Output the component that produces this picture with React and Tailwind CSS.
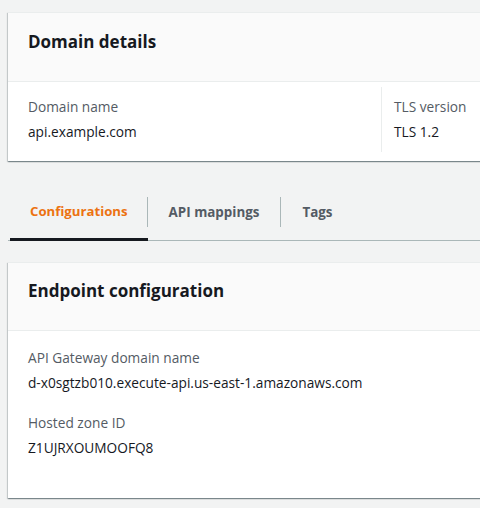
export default function App() {
  const font = { fontFamily: '"Open Sans", "Noto Sans", sans-serif' };
  return (
    <div
      className="w-[480px] h-[508px] overflow-hidden bg-[#f2f3f3] pt-3 pl-2"
      style={font}
    >
      {/* Card 1 */}
      <div className="w-[520px] bg-white border-t border-[#eaeded] shadow-[0_1px_1px_0_rgba(0,28,36,0.3),1px_1px_1px_0_rgba(0,28,36,0.15),-1px_1px_1px_0_rgba(0,28,36,0.15)]">
        <div className="h-[69px] bg-[#fafafa] border-b border-[#eaeded] px-5 pt-[18px]">
          <h2 className="text-[17px] leading-[22px] font-bold text-[#16191f]">Domain details</h2>
        </div>
        <div className="pt-[5px] pb-[9px] flex">
          <div className="w-[373px] pl-5 py-[9px]">
            <div className="text-[13.7px] leading-[22px] text-[#545b64]">Domain name</div>
            <div className="mt-[3px] text-[13.7px] leading-[22px] text-[#16191f]">api.example.com</div>
          </div>
          <div className="border-l border-[#eaeded] pl-3 py-[9px]">
            <div className="text-[13.7px] leading-[22px] text-[#545b64]">TLS version</div>
            <div className="mt-[3px] text-[13.7px] leading-[22px] text-[#16191f]">TLS 1.2</div>
          </div>
        </div>
      </div>

      {/* Tabs */}
      <div className="mt-[28px] w-[520px] border-b border-[#aab7b8] flex pl-[2px]">
        <div className="pt-[8px] pb-[11px] border-b-[3px] border-[#16191f] -mb-px">
          <div className="h-[30px] flex items-center pl-5 pr-[19px] border-r border-[#aab7b8] text-[13.2px] font-bold text-[#ec7211]">
            Configurations
          </div>
        </div>
        <div className="pt-[8px] pb-[11px] border-b-[3px] border-transparent -mb-px">
          <div className="h-[30px] flex items-center pl-[21px] pr-[21px] border-r border-[#aab7b8] text-[13.4px] font-bold text-[#545b64]">
            API mappings
          </div>
        </div>
        <div className="pt-[8px] pb-[11px] border-b-[3px] border-transparent -mb-px">
          <div className="h-[30px] flex items-center pl-[21px] pr-5 text-[13.4px] font-bold text-[#545b64]">
            Tags
          </div>
        </div>
      </div>

      {/* Card 2 */}
      <div className="mt-[21px] w-[520px] bg-white border-t border-[#eaeded] shadow-[0_1px_1px_0_rgba(0,28,36,0.3),1px_1px_1px_0_rgba(0,28,36,0.15),-1px_1px_1px_0_rgba(0,28,36,0.15)]">
        <div className="h-[68px] bg-[#fafafa] border-b border-[#eaeded] px-5 pt-[17px]">
          <h2 className="text-[17px] leading-[22px] font-bold text-[#16191f]">Endpoint configuration</h2>
        </div>
        <div className="pt-[16px] pb-[39px] px-5">
          <div className="text-[13.7px] leading-[22px] text-[#545b64]">API Gateway domain name</div>
          <div className="mt-[3px] text-[13.7px] leading-[22px] text-[#16191f]">
            d-x0sgtzb010.execute-api.us-east-1.amazonaws.com
          </div>
          <div className="mt-[18px] text-[13.7px] leading-[22px] text-[#545b64]">Hosted zone ID</div>
          <div className="mt-[3px] text-[13.7px] leading-[22px] text-[#16191f]">Z1UJRXOUMOOFQ8</div>
        </div>
      </div>
    </div>
  );
}
